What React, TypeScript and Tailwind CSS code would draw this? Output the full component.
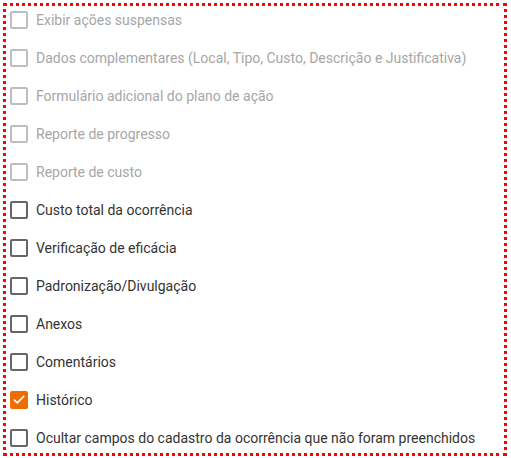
import { Check } from "lucide-react";

type Item = { label: string; disabled?: boolean; checked?: boolean };

const items: Item[] = [
  { label: "Exibir ações suspensas", disabled: true },
  { label: "Dados complementares (Local, Tipo, Custo, Descrição e Justificativa)", disabled: true },
  { label: "Formulário adicional do plano de ação", disabled: true },
  { label: "Reporte de progresso", disabled: true },
  { label: "Reporte de custo", disabled: true },
  { label: "Custo total da ocorrência" },
  { label: "Verificação de eficácia" },
  { label: "Padronização/Divulgação" },
  { label: "Anexos" },
  { label: "Comentários" },
  { label: "Histórico", checked: true },
  { label: "Ocultar campos do cadastro da ocorrência que não foram preenchidos" },
];

function Row({ label, disabled, checked }: Item) {
  return (
    <label className="flex h-[38px] items-center gap-2 pl-[10px]">
      {checked ? (
        <span className="flex h-[18px] w-[18px] items-center justify-center rounded-[2px] bg-[#ef6c00]">
          <Check size={14} strokeWidth={3} className="text-white" />
        </span>
      ) : (
        <span
          className={`h-[18px] w-[18px] rounded-[2px] border-2 ${
            disabled ? "border-[#bdbdbd]" : "border-[#666666]"
          }`}
        ></span>
      )}
      <span className={`text-[14px] ${disabled ? "text-[#a6a6a6]" : "text-[#333333]"}`}>{label}</span>
    </label>
  );
}

export default function App() {
  return (
    <div
      className="h-[459px] w-[510px] bg-white outline-[3px] outline-dotted outline-[#ff0000] -outline-offset-[6px]"
      style={{ fontFamily: "Roboto, 'Liberation Sans', sans-serif" }}
    >
      <div className="flex flex-col pt-[1px]">
        {items.map((it) => (
          <Row key={it.label} {...it} />
        ))}
      </div>
    </div>
  );
}
